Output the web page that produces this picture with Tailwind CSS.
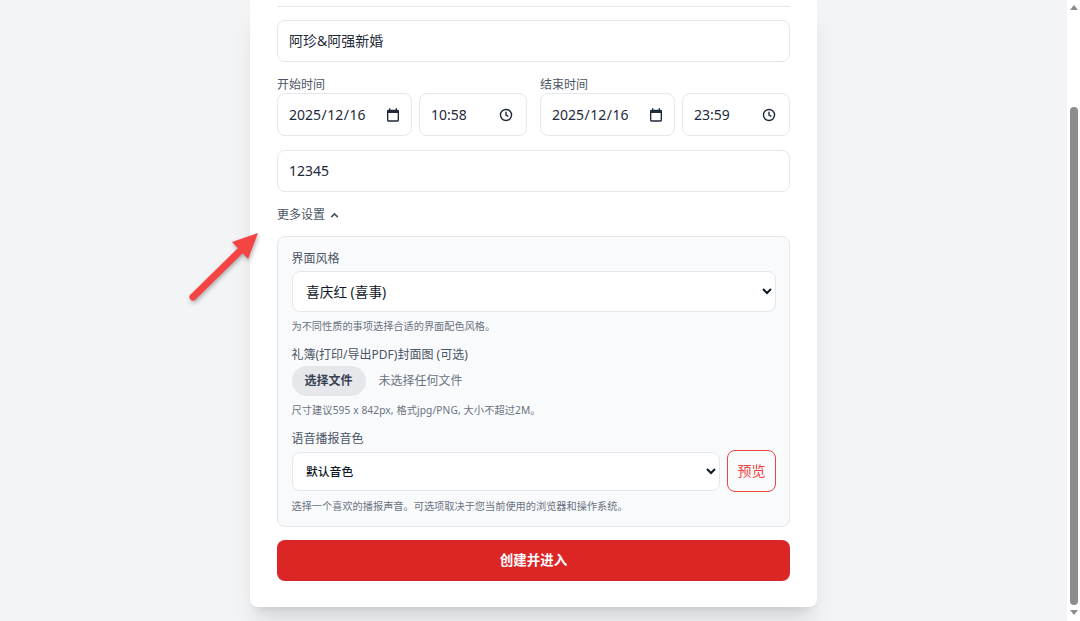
<!DOCTYPE html>
<html lang="zh-CN">
<head>
  <meta charset="UTF-8">
  <meta name="viewport" content="width=device-width, initial-scale=1.0">
  <title>创建事项</title>
  <script src="https://cdn.jsdelivr.net/npm/@tailwindcss/browser@4"></script>
</head>
<body class="relative flex h-[621px] overflow-hidden bg-gray-100 font-['Noto_Sans','Noto_Sans_CJK_SC',sans-serif] text-gray-800">
  <main class="flex-1 pl-[250px]">
    <form class="w-[567px] h-[607px] bg-white rounded-b-lg shadow-xl px-[27px] pt-[6px]">
      <div class="border-t border-gray-200 pt-[13px]">
        <div class="h-[42px] flex items-center px-[11px] border border-gray-200 rounded-lg text-sm">阿珍&amp;阿强新婚</div>
      </div>

      <div class="mt-[14px] grid grid-cols-2 gap-[13px]">
        <div>
          <label class="block h-[17px] text-xs leading-[17px] text-gray-600">开始时间</label>
          <div class="flex gap-[7px]">
            <div class="w-[135px] h-[43px] flex items-center justify-between pl-[11px] pr-[10px] border border-gray-200 rounded-lg text-sm">
              <span>2025<span class="mx-[0.5px]">/</span>12<span class="mx-[0.5px]">/</span>16</span>
              <svg class="w-[16px] h-[16px]" viewBox="0 0 24 24" fill="currentColor"><path d="M19 4h-1V2h-2v2H8V2H6v2H5a2 2 0 0 0-2 2v14a2 2 0 0 0 2 2h14a2 2 0 0 0 2-2V6a2 2 0 0 0-2-2zm0 16H5V9h14v11z"/></svg>
            </div>
            <div class="flex-1 h-[43px] flex items-center justify-between pl-[11px] pr-[13px] border border-gray-200 rounded-lg text-sm">
              <span>10:58</span>
              <svg class="w-[14px] h-[14px]" viewBox="0 0 24 24" fill="none" stroke="currentColor" stroke-width="2.4"><circle cx="12" cy="12" r="9.5"/><path d="M12 6.5V12l4 2.5"/></svg>
            </div>
          </div>
        </div>
        <div>
          <label class="block h-[17px] text-xs leading-[17px] text-gray-600">结束时间</label>
          <div class="flex gap-[7px]">
            <div class="w-[135px] h-[43px] flex items-center justify-between pl-[11px] pr-[10px] border border-gray-200 rounded-lg text-sm">
              <span>2025<span class="mx-[0.5px]">/</span>12<span class="mx-[0.5px]">/</span>16</span>
              <svg class="w-[16px] h-[16px]" viewBox="0 0 24 24" fill="currentColor"><path d="M19 4h-1V2h-2v2H8V2H6v2H5a2 2 0 0 0-2 2v14a2 2 0 0 0 2 2h14a2 2 0 0 0 2-2V6a2 2 0 0 0-2-2zm0 16H5V9h14v11z"/></svg>
            </div>
            <div class="flex-1 h-[43px] flex items-center justify-between pl-[11px] pr-[13px] border border-gray-200 rounded-lg text-sm">
              <span>23:59</span>
              <svg class="w-[14px] h-[14px]" viewBox="0 0 24 24" fill="none" stroke="currentColor" stroke-width="2.4"><circle cx="12" cy="12" r="9.5"/><path d="M12 6.5V12l4 2.5"/></svg>
            </div>
          </div>
        </div>
      </div>

      <div class="mt-[14px] h-[42px] flex items-center px-[11px] border border-gray-200 rounded-lg text-sm">12345</div>

      <div class="mt-[14px] h-[18px] flex items-center gap-[4px] text-xs text-gray-600">
        更多设置
        <svg class="w-[11px] h-[11px]" viewBox="0 0 20 20" fill="none" stroke="currentColor" stroke-width="3"><path d="M4 13l6-6 6 6"/></svg>
      </div>

      <div class="mt-[12px] h-[291px] bg-gray-50 border border-gray-200 rounded-lg pl-[13.5px] pr-[13px] pt-[13px]">
        <label class="block h-[17px] text-xs leading-[17px] text-gray-600">界面风格</label>
        <select class="mt-[4px] w-full h-[41px] px-[9.5px] bg-white border border-gray-200 rounded-lg text-[13.7px] text-gray-900">
          <option>喜庆红 (喜事)</option>
        </select>
        <p class="mt-[7px] h-[14px] text-[10.2px] leading-[14px] text-gray-500">为不同性质的事项选择合适的界面配色风格。</p>

        <label class="block mt-[13px] h-[17px] text-xs leading-[17px] text-gray-600">礼簿(打印/导出PDF)封面图 (可选)</label>
        <div class="mt-[3px] flex items-center gap-[13px]">
          <button type="button" class="w-[74px] h-[30px] bg-gray-200 rounded-full text-xs font-bold text-gray-700">选择文件</button>
          <span class="text-xs text-gray-500">未选择任何文件</span>
        </div>
        <p class="mt-[7px] h-[14px] text-[10.2px] tracking-[0.1px] leading-[14px] text-gray-500">尺寸建议595 x 842px, 格式jpg/PNG, 大小不超过2M。</p>

        <label class="block mt-[13px] h-[17px] text-xs leading-[17px] text-gray-600">语音播报音色</label>
        <div class="mt-[3px] flex items-center gap-[7px]">
          <select class="flex-1 h-[39px] px-[9.5px] bg-white border border-gray-200 rounded-lg text-[11.8px] font-medium text-gray-900">
            <option>默认音色</option>
          </select>
          <button type="button" class="w-[49px] h-[42px] border border-[#ef4444] rounded-lg text-sm text-[#ef4444]">预览</button>
        </div>
        <p class="mt-[7px] h-[14px] text-[10.2px] leading-[14px] text-gray-500">选择一个喜欢的播报声音。可选项取决于您当前使用的浏览器和操作系统。</p>
      </div>

      <button type="button" class="mt-[13px] w-full h-[41px] bg-[#dc2626] rounded-lg text-[13.5px] font-bold text-white">创建并进入</button>
    </form>
  </main>

  <aside class="w-[13px] h-full bg-white flex flex-col items-center">
    <svg class="w-[8px] h-[5px] mt-[5px] text-[#8c8c8c]" viewBox="0 0 8 5" fill="currentColor"><path d="M4 0l4 5H0z"/></svg>
    <div class="w-[8px] mt-[97px] h-[498px] rounded-full bg-[#8c8c8c]"></div>
    <svg class="w-[8px] h-[5px] mt-[5px] text-[#8c8c8c]" viewBox="0 0 8 5" fill="currentColor"><path d="M4 5L0 0h8z"/></svg>
  </aside>

  <svg class="absolute left-[185px] top-[228px] w-[80px] h-[78px] drop-shadow-[1px_2px_2px_rgba(0,0,0,0.3)]" viewBox="0 0 80 78" fill="#f44444">
    <path d="M8 69L56 22" stroke="#f44444" stroke-width="7" stroke-linecap="round"/>
    <path d="M73 5L47 14L63 31z"/>
  </svg>
</body>
</html>
